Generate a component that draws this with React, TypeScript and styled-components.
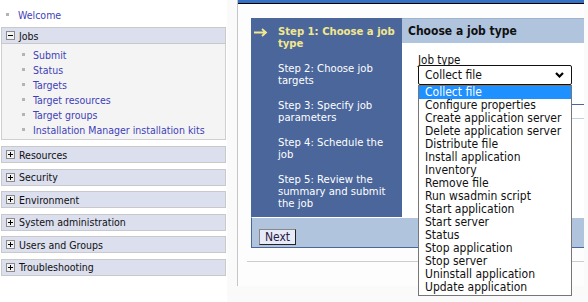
import React from 'react';
import styled, { createGlobalStyle } from 'styled-components';

const GlobalStyle = createGlobalStyle`
  body {
    margin: 0;
    background: #fafafa;
    font-family: Tahoma, "DejaVu Sans Condensed", "DejaVu Sans", sans-serif;
  }
`;

const Page = styled.div`
  display: flex;
  width: 588px;
  height: 302px;
  overflow: hidden;
`;

const Nav = styled.div`
  width: 225px;
  padding: 0 1px;
  flex-shrink: 0;
  background: #ffffff;
  font-size: 10.5px;
`;

const WelcomeRow = styled.div`
  display: flex;
  align-items: center;
  height: 15px;
  padding: 7px 0 0 5px;
`;

const Bullet = styled.span`
  width: 3px;
  height: 3px;
  background: #b4b4b4;
  flex-shrink: 0;
`;

const NavLink = styled.a<{ $indent: number }>`
  margin-left: ${(p) => p.$indent}px;
  color: #3f3fb8;
  text-decoration: none;
  white-space: nowrap;
`;

const SectionHeader = styled.div<{ $gap: number }>`
  display: flex;
  align-items: center;
  height: 15px;
  margin-top: ${(p) => p.$gap}px;
  padding-left: 4px;
  background: #dcdfee;
  border: 1px solid #c9c9c9;
  color: #111;
`;

const HeaderLabel = styled.span`
  margin-left: 4px;
`;

const SubList = styled.div`
  padding: 3px 0 2px 0;
  background: #f4f4f4;
  border: 1px solid #cfcfcf;
  border-top: none;
`;

const SubItem = styled.div`
  display: flex;
  align-items: center;
  height: 15px;
  padding-left: 20px;
`;

const Main = styled.div`
  margin-left: 10px;
  width: 346px;
  height: 286px;
  flex-shrink: 0;
  background: #fdfdfd;
  border-left: 1px solid #c6c6c6;
  display: flex;
  flex-direction: column;
`;

const TitleBar = styled.div`
  height: 3px;
  background: #3471c4;
  border-bottom: 1px solid #000;
`;

const Body = styled.div`
  padding: 14px 0 0 9px;
`;

const Wizard = styled.div`
  margin-left: 4px;
  display: grid;
  grid-template-columns: 151px 182px;
  grid-template-rows: 199px auto;
`;

const Steps = styled.div`
  background: #4a669b;
  padding: 8px 4px 0 2px;
  display: flex;
  flex-direction: column;
  gap: 13px;
`;

const Step = styled.div<{ $active?: boolean }>`
  display: flex;
  font-size: 11.2px;
  line-height: 12px;
  color: ${(p) => (p.$active ? '#f3e78e' : '#ffffff')};
  font-weight: ${(p) => (p.$active ? 'bold' : 'normal')};
`;

const ArrowCell = styled.div`
  width: 25px;
  flex-shrink: 0;
  padding-top: 2px;
`;

const Pane = styled.div`
  background: #ffffff;
  position: relative;
`;

const PaneHeader = styled.div`
  height: 24px;
  line-height: 25px;
  padding-left: 6px;
  background: #b0c4de;
  border-top: 1px solid #9fb3d0;
  font-size: 12px;
  font-weight: bold;
  color: #111;
`;

const PaneContent = styled.div`
  padding: 12px 0 0 16px;
`;

const FieldLabel = styled.div`
  font-size: 11.5px;
  line-height: 10px;
  height: 10px;
  color: #111;
`;

const SelectWrap = styled.div`
  position: relative;
  width: 154px;
`;

const SelectBox = styled.div`
  box-sizing: border-box;
  height: 20px;
  border: 1px solid #111;
  border-radius: 2px;
  background: #fff;
  display: flex;
  align-items: center;
  justify-content: space-between;
  padding: 0 7px 0 6px;
  font-size: 12px;
  color: #111;
`;

const OptionList = styled.div`
  position: absolute;
  top: 20px;
  left: 0;
  width: 154px;
  box-sizing: border-box;
  border: 1px solid #767676;
  background: #fff;
  z-index: 2;
  padding-bottom: 1px;
`;

const Option = styled.div<{ $selected?: boolean }>`
  height: 13px;
  line-height: 13px;
  padding-left: 6px;
  font-size: 12px;
  white-space: nowrap;
  background: ${(p) => (p.$selected ? '#1e90ff' : 'transparent')};
  color: ${(p) => (p.$selected ? '#fff' : '#111')};
`;

const TableStub = styled.div`
  margin-top: 19px;
  height: 13px;
  border-top: 1px solid #4a669b;
  border-bottom: 1px solid #c3cfe2;
`;

const ButtonRow = styled.div`
  grid-column: 1 / span 2;
  box-sizing: border-box;
  height: 31px;
  background: #b0c4de;
  border-top: 1px solid #fff;
  border-left: 1px solid #4a669b;
  border-bottom: 1px solid #4a669b;
  padding: 8px 0 0 7px;
`;

const NextButton = styled.button`
  box-sizing: border-box;
  width: 37px;
  height: 16px;
  padding: 0;
  background: #e7ebf7;
  border: 1px solid #222;
  border-top-color: #888;
  border-left-color: #888;
  font-family: inherit;
  font-size: 12px;
  color: #2a1a44;
`;

const Rule = styled.div`
  margin-top: 13px;
  height: 1px;
  background: #cccccc;
`;

const ToggleIcon: React.FC<{ open?: boolean }> = ({ open }) => (
  <svg width="9" height="9" viewBox="0 0 9 9">
    <rect x="0.5" y="0.5" width="8" height="8" fill="#f2f2f2" stroke="#8a8a8a" />
    <line x1="2" y1="4.5" x2="7" y2="4.5" stroke="#000" />
    {!open && <line x1="4.5" y1="2" x2="4.5" y2="7" stroke="#000" />}
  </svg>
);

const Arrow = () => (
  <svg width="15" height="9" viewBox="0 0 15 9">
    <path d="M1 4.5H13M9 1L13 4.5L9 8" fill="none" stroke="#f3e78e" strokeWidth="1.8" />
  </svg>
);

const Chevron = () => (
  <svg width="9" height="6" viewBox="0 0 9 6">
    <path d="M1 1L4.5 4.5L8 1" fill="none" stroke="#000" strokeWidth="2.2" />
  </svg>
);

const jobLinks = [
  'Submit',
  'Status',
  'Targets',
  'Target resources',
  'Target groups',
  'Installation Manager installation kits',
];

const sections = [
  'Resources',
  'Security',
  'Environment',
  'System administration',
  'Users and Groups',
  'Troubleshooting',
];

const steps = [
  'Step 1: Choose a job type',
  'Step 2: Choose job targets',
  'Step 3: Specify job parameters',
  'Step 4: Schedule the job',
  'Step 5: Review the summary and submit the job',
];

const jobTypes = [
  'Collect file',
  'Configure properties',
  'Create application server',
  'Delete application server',
  'Distribute file',
  'Install application',
  'Inventory',
  'Remove file',
  'Run wsadmin script',
  'Start application',
  'Start server',
  'Status',
  'Stop application',
  'Stop server',
  'Uninstall application',
  'Update application',
];

const App: React.FC = () => {
  return (
    <Page>
      <GlobalStyle />
      <Nav>
        <WelcomeRow>
          <Bullet />
          <NavLink $indent={9}>Welcome</NavLink>
        </WelcomeRow>
        <SectionHeader $gap={5}>
          <ToggleIcon open />
          <HeaderLabel>Jobs</HeaderLabel>
        </SectionHeader>
        <SubList>
          {jobLinks.map((l) => (
            <SubItem key={l}>
              <Bullet />
              <NavLink $indent={8}>{l}</NavLink>
            </SubItem>
          ))}
        </SubList>
        {sections.map((s, i) => (
          <SectionHeader key={s} $gap={i === 0 ? 6 : 5.5}>
            <ToggleIcon />
            <HeaderLabel>{s}</HeaderLabel>
          </SectionHeader>
        ))}
      </Nav>
      <Main>
        <TitleBar />
        <Body>
          <Wizard>
            <Steps>
              {steps.map((s, i) => (
                <Step key={s} $active={i === 0}>
                  <ArrowCell>{i === 0 && <Arrow />}</ArrowCell>
                  <span>{s}</span>
                </Step>
              ))}
            </Steps>
            <Pane>
              <PaneHeader>Choose a job type</PaneHeader>
              <PaneContent>
                <FieldLabel>Job type</FieldLabel>
                <SelectWrap>
                  <SelectBox>
                    <span>Collect file</span>
                    <Chevron />
                  </SelectBox>
                  <OptionList>
                    {jobTypes.map((t, i) => (
                      <Option key={t} $selected={i === 0}>
                        {t}
                      </Option>
                    ))}
                  </OptionList>
                </SelectWrap>
                <TableStub />
              </PaneContent>
            </Pane>
            <ButtonRow>
              <NextButton>Next</NextButton>
            </ButtonRow>
          </Wizard>
          <Rule />
        </Body>
      </Main>
    </Page>
  );
};

export default App;
